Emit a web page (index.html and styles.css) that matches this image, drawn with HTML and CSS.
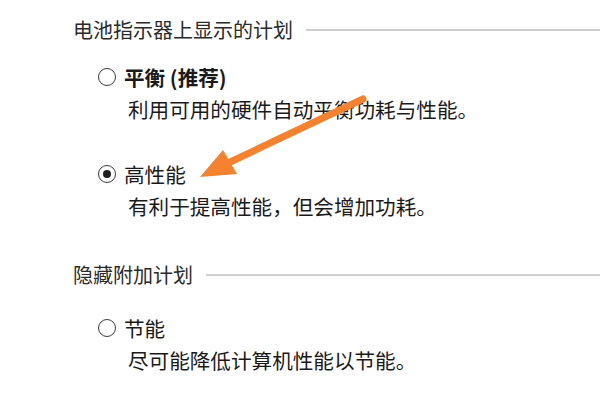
FILE: index.html
```html
<!DOCTYPE html>
<html lang="zh-CN">
<head>
<meta charset="utf-8">
<link rel="stylesheet" href="styles.css">
</head>
<body>
<div class="page">
  <div class="heading first"><span class="heading-text">电池指示器上显示的计划</span><span class="rule"></span></div>
  <div class="option opt1">
    <div class="label"><span class="radio"></span><span class="name bold">平衡 (推荐)</span></div>
    <div class="desc">利用可用的硬件自动平衡功耗与性能。</div>
  </div>
  <div class="option opt2">
    <div class="label"><span class="radio checked"></span><span class="name">高性能</span></div>
    <div class="desc">有利于提高性能，但会增加功耗。</div>
  </div>
  <div class="heading second"><span class="heading-text">隐藏附加计划</span><span class="rule"></span></div>
  <div class="option opt3">
    <div class="label"><span class="radio"></span><span class="name">节能</span></div>
    <div class="desc">尽可能降低计算机性能以节能。</div>
  </div>
  <svg class="arrow" width="600" height="400" viewBox="0 0 600 400">
    <line x1="363" y1="99" x2="226" y2="164" stroke="#f5822f" stroke-width="7" stroke-linecap="round"/>
    <polygon points="200,177 223,150 237,174" fill="#f5822f"/>
  </svg>
</div>
</body>
</html>
```
FILE: styles.css
```css
html, body {
  margin: 0;
  padding: 0;
  background: #ffffff;
}
.page {
  position: relative;
  width: 600px;
  height: 400px;
  overflow: hidden;
  font-family: "Noto Sans CJK SC", "Noto Sans", sans-serif;
  font-size: 20px;
  line-height: 30px;
  color: #1a1a1a;
  padding-left: 73px;
  box-sizing: border-box;
}
.heading {
  display: flex;
  align-items: center;
  color: #2b2b2b;
}
.heading.first { padding-top: 15px; }
.heading.second { margin-top: 39px; }
.heading-text { white-space: nowrap; }
.rule {
  flex: 1;
  height: 2px;
  background: #cfcfcf;
  margin-left: 13px;
}
.option {
  padding-left: 25px;
  font-size: 20.6px;
}
.opt1 { margin-top: 17px; }
.opt2 { margin-top: 35px; }
.opt3 { margin-top: 23px; }
.label {
  display: flex;
  align-items: center;
  gap: 8px;
}
.radio {
  width: 18px;
  height: 18px;
  box-sizing: border-box;
  border: 1.5px solid #3a3a3a;
  border-radius: 50%;
  display: flex;
  align-items: center;
  justify-content: center;
  flex: none;
}
.radio.checked::after {
  content: "";
  width: 8px;
  height: 8px;
  border-radius: 50%;
  background: #1e1e1e;
}
.bold { font-weight: bold; }
.desc {
  margin-top: 2px;
  padding-left: 30px;
}
.arrow {
  position: absolute;
  left: 0;
  top: 0;
  pointer-events: none;
}
```
